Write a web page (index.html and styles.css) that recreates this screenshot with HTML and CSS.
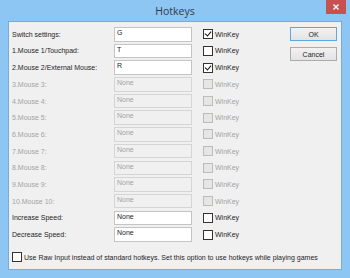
FILE: index.html
```html
<!DOCTYPE html>
<html>
<head>
<meta charset="utf-8">
<title>Hotkeys</title>
<link rel="stylesheet" href="styles.css">
</head>
<body>
<div class="window">
    <div class="titlebar">
        <span class="title">Hotkeys</span>
        <span class="close">
            <svg width="6" height="6" viewBox="0 0 6 6"><path d="M0.5 0.5L5.5 5.5M5.5 0.5L0.5 5.5" stroke="#fff" stroke-width="1.4"/></svg>
        </span>
    </div>
    <div class="client">
        <div class="main">
            <div class="rows">
                <label>Switch settings:</label>
                <div class="field">G</div>
                <div class="win"><span class="box checked"></span>WinKey</div>

                <label>1.Mouse 1/Touchpad:</label>
                <div class="field">T</div>
                <div class="win"><span class="box"></span>WinKey</div>

                <label>2.Mouse 2/External Mouse:</label>
                <div class="field">R</div>
                <div class="win"><span class="box checked"></span>WinKey</div>

                <label class="off">3.Mouse 3:</label>
                <div class="field off">None</div>
                <div class="win off"><span class="box"></span>WinKey</div>

                <label class="off">4.Mouse 4:</label>
                <div class="field off">None</div>
                <div class="win off"><span class="box"></span>WinKey</div>

                <label class="off">5.Mouse 5:</label>
                <div class="field off">None</div>
                <div class="win off"><span class="box"></span>WinKey</div>

                <label class="off">6.Mouse 6:</label>
                <div class="field off">None</div>
                <div class="win off"><span class="box"></span>WinKey</div>

                <label class="off">7.Mouse 7:</label>
                <div class="field off">None</div>
                <div class="win off"><span class="box"></span>WinKey</div>

                <label class="off">8.Mouse 8:</label>
                <div class="field off">None</div>
                <div class="win off"><span class="box"></span>WinKey</div>

                <label class="off">9.Mouse 9:</label>
                <div class="field off">None</div>
                <div class="win off"><span class="box"></span>WinKey</div>

                <label class="off">10.Mouse 10:</label>
                <div class="field off">None</div>
                <div class="win off"><span class="box"></span>WinKey</div>

                <label>Increase Speed:</label>
                <div class="field">None</div>
                <div class="win"><span class="box"></span>WinKey</div>

                <label>Decrease Speed:</label>
                <div class="field">None</div>
                <div class="win"><span class="box"></span>WinKey</div>
            </div>
            <div class="buttons">
                <div class="btn default">OK</div>
                <div class="btn">Cancel</div>
            </div>
        </div>
        <div class="raw"><span class="box"></span>Use Raw Input instead of standard hotkeys. Set this option to use hotkeys while playing games</div>
    </div>
</div>
</body>
</html>
```

FILE: styles.css
```css
body {
    margin: 0;
    padding: 0;
    font-family: "Liberation Sans", Arial, sans-serif;
    font-size: 7px;
    color: #1e1e1e;
}
.window {
    width: 350px;
    height: 278px;
    box-sizing: border-box;
    background: #8dc5f3;
    padding: 0 8px 8px 8px;
    display: flex;
    flex-direction: column;
}
.titlebar {
    height: 21px;
    display: flex;
    align-items: center;
    justify-content: center;
    position: relative;
}
.title {
    font-family: "Open Sans", "Liberation Sans", sans-serif;
    font-size: 10.5px;
    color: #2d3c4c;
    margin-top: 1px;
}
.close {
    position: absolute;
    right: -4px;
    top: 0;
    width: 20px;
    height: 14px;
    background: #c75050;
    display: flex;
    align-items: center;
    justify-content: center;
}
.client {
    flex: 1;
    background: #f0f0f0;
    border: 1px solid #78acd8;
    display: flex;
    flex-direction: column;
}
.main {
    display: flex;
    padding: 5px 4px 0 3px;
}
.rows {
    display: grid;
    grid-template-columns: 102px 78px auto;
    grid-auto-rows: 14.5px;
    row-gap: 2.2px;
    align-items: center;
}
label.off, .win.off, .field.off {
    color: #a3a3a3;
}
.field {
    height: 100%;
    box-sizing: border-box;
    background: #fff;
    border: 1px solid #c4c4c4;
    padding: 1px 0 0 2px;
}
.field.off {
    background: #f0f0f0;
    border-color: #d5d5d5;
}
.win {
    display: flex;
    align-items: center;
    padding-left: 11px;
}
.box {
    width: 8px;
    height: 8px;
    border: 1px solid #333;
    background: #fff;
    margin-right: 2px;
    position: relative;
}
.off .box {
    border-color: #bcbcbc;
    background: #e6e6e6;
}
.box.checked::after {
    content: "";
    position: absolute;
    left: 2px;
    top: 0;
    width: 3px;
    height: 5px;
    border: solid #111;
    border-width: 0 1.5px 1.5px 0;
    transform: rotate(40deg);
}
.buttons {
    margin-left: auto;
    display: flex;
    flex-direction: column;
    gap: 6px;
}
.btn {
    width: 47px;
    height: 14px;
    box-sizing: border-box;
    border: 1px solid #acacac;
    background: linear-gradient(#f2f2f2, #e3e3e3);
    display: flex;
    align-items: center;
    justify-content: center;
}
.btn.default {
    border-color: #5ea6e4;
}
.raw {
    display: flex;
    align-items: center;
    margin: auto 0 7px 3px;
}
```
